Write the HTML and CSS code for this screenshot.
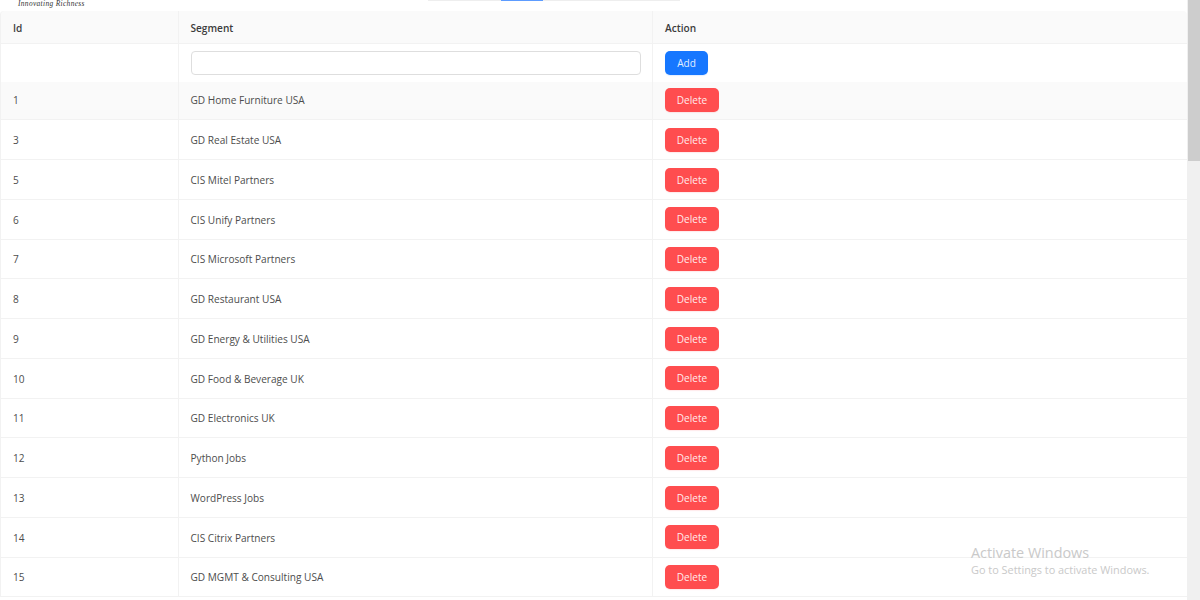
FILE: index.html
```html
<!DOCTYPE html>
<html lang="en">
<head>
<meta charset="utf-8">
<title>Segments</title>
<link rel="stylesheet" href="styles.css">
</head>
<body>
<div class="page">
  <main class="main">
    <header class="topbar">
      <div class="logo">Innovating Richness</div>
      <div class="tabs"><span class="tab"></span><span class="tab active"></span><span class="tab wide"></span></div>
    </header>
    <table class="grid">
      <colgroup><col class="c-id"><col class="c-seg"><col></colgroup>
      <thead>
        <tr><th>Id</th><th>Segment</th><th>Action</th></tr>
      </thead>
      <tbody>
        <tr class="add-row"><td></td><td><input class="field" type="text"></td><td><button class="btn primary">Add</button></td></tr>
        <tr class="first hover"><td>1</td><td>GD Home Furniture USA</td><td><button class="btn danger">Delete</button></td></tr>
        <tr><td>3</td><td>GD Real Estate USA</td><td><button class="btn danger">Delete</button></td></tr>
        <tr><td>5</td><td>CIS Mitel Partners</td><td><button class="btn danger">Delete</button></td></tr>
        <tr><td>6</td><td>CIS Unify Partners</td><td><button class="btn danger">Delete</button></td></tr>
        <tr><td>7</td><td>CIS Microsoft Partners</td><td><button class="btn danger">Delete</button></td></tr>
        <tr><td>8</td><td>GD Restaurant USA</td><td><button class="btn danger">Delete</button></td></tr>
        <tr><td>9</td><td>GD Energy &amp; Utilities USA</td><td><button class="btn danger">Delete</button></td></tr>
        <tr><td>10</td><td>GD Food &amp; Beverage UK</td><td><button class="btn danger">Delete</button></td></tr>
        <tr><td>11</td><td>GD Electronics UK</td><td><button class="btn danger">Delete</button></td></tr>
        <tr><td>12</td><td>Python Jobs</td><td><button class="btn danger">Delete</button></td></tr>
        <tr><td>13</td><td>WordPress Jobs</td><td><button class="btn danger">Delete</button></td></tr>
        <tr><td>14</td><td>CIS Citrix Partners</td><td><button class="btn danger">Delete</button></td></tr>
        <tr><td>15</td><td>GD MGMT &amp; Consulting USA</td><td><button class="btn danger">Delete</button></td></tr>
      </tbody>
    </table>
  </main>
  <div class="scrollbar"><div class="thumb"></div></div>
  <div class="activate">
    <div class="activate-title">Activate Windows</div>
    <div class="activate-sub">Go to Settings to activate Windows.</div>
  </div>
</div>
</body>
</html>
```
FILE: styles.css
```css
* { box-sizing: border-box; }
html, body { margin: 0; height: 100%; overflow: hidden; background: #fff; }
body { font-family: "Open Sans", "Noto Sans", sans-serif; font-size: 10.1px; color: #4d4d4d; }
.page { display: flex; height: 600px; width: 1200px; overflow: hidden; position: relative; }
.main { flex: 1; min-width: 0; }
.scrollbar { width: 13px; background: #f0f0f0; flex: none; }
.thumb { height: 161px; background: #cdcdcd; margin-left: 1px; }

.topbar { height: 11px; position: relative; display: flex; overflow: hidden; }
.logo { font-family: "Liberation Serif", serif; font-style: italic; font-size: 7.4px; line-height: 7px; color: #333; margin-left: 18px; letter-spacing: .35px; width: 410px; flex: none; white-space: nowrap; }
.tabs { display: flex; height: 1px; width: 252px; background: #eeeeee; }
.tab { width: 73px; }
.tab.active { width: 42px; background: #5d9cff; }
.tab.wide { flex: 1; }

.grid { border-collapse: separate; border-spacing: 0; table-layout: fixed; width: 1187px; }
.c-id { width: 179px; }
.c-seg { width: 474px; }
.grid th, .grid td { padding: 1px 0 0 12px; text-align: left; border-right: 1px solid #f2f2f2; border-bottom: 1px solid #f2f2f2; }
.grid th:nth-child(2), .grid td:nth-child(2) { padding-left: 11.5px; }
.grid th:first-child, .grid td:first-child { border-left: 1px solid #f2f2f2; }
.grid th:last-child, .grid td:last-child { border-right: 0; }
.grid td:last-child { padding-top: .4px; }
.grid th { height: 33px; background: #fafafa; color: #3c3c3c; font-weight: 600; font-size: 10.1px; }
.grid th:first-child { border-top-left-radius: 4px; }
.grid th:last-child { border-top-right-radius: 4px; }
.grid td { height: 39.75px; }
.grid .add-row td { height: 38px; padding-top: 0; border-bottom: 0; }
.grid .first td { height: 38.25px; padding-top: 0; padding-bottom: 1px; }
.hover td { background: #fafafa; }

.field { display: block; width: 450px; height: 24px; border: 1px solid #dedede; border-radius: 4px; background: #fff; outline: 0; padding: 0 8px; }
.btn { display: block; height: 24px; border: 0; border-radius: 5px; color: rgba(255, 255, 255, .9); font: 10.1px "Open Sans", "Noto Sans", sans-serif; padding: 0; }
.primary { width: 43px; background: #1677ff; box-shadow: 0 1px 1px rgba(22, 119, 255, .12); }
.danger { width: 54px; background: #ff4d4f; box-shadow: 0 1px 1px rgba(255, 77, 79, .12); }

.activate { position: absolute; left: 971px; top: 544px; color: #c9c9c9; pointer-events: none; }
.activate-title { font-size: 14.4px; line-height: 18px; }
.activate-sub { font-size: 10.9px; line-height: 16px; }
```
